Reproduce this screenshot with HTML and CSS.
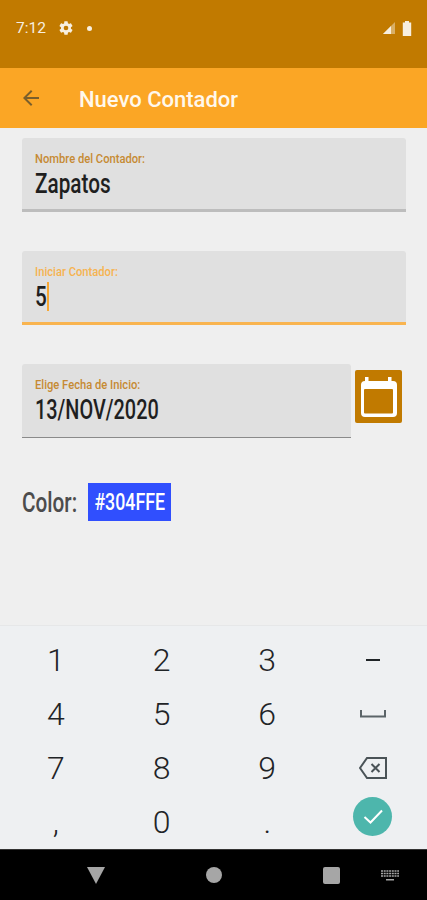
FILE: index.html
```html
<!DOCTYPE html>
<html lang="es">
  <head>
    <meta charset="UTF-8" />
    <meta name="viewport" content="width=device-width, initial-scale=1.0" />
    <title>Nuevo Contador</title>
    <link rel="stylesheet" href="styles.css">
  </head>
  <body>
    <div class="phone">
      <div class="status-bar">
        <div class="status-left">
          <span class="clock">7:12</span>
          <svg class="gear" viewBox="0 0 24 24" width="16" height="16"><path fill="#f7efe0" d="M19.4 13c.04-.33.06-.66.06-1s-.02-.67-.07-1l2.1-1.65c.2-.15.25-.42.13-.64l-2-3.46c-.12-.22-.39-.3-.61-.22l-2.49 1c-.52-.4-1.08-.73-1.69-.98l-.38-2.65A.49.49 0 0 0 14 2h-4c-.25 0-.46.18-.49.42l-.38 2.65c-.61.25-1.17.59-1.69.98l-2.49-1c-.23-.09-.49 0-.61.22l-2 3.46c-.13.22-.07.49.12.64L4.57 11c-.04.32-.07.66-.07 1s.03.68.07 1l-2.11 1.65c-.19.15-.24.42-.12.64l2 3.46c.12.22.39.3.61.22l2.49-1c.52.4 1.08.73 1.69.98l.38 2.65c.03.24.24.42.49.42h4c.25 0 .46-.18.49-.42l.38-2.65c.61-.25 1.17-.59 1.69-.98l2.49 1c.23.09.49 0 .61-.22l2-3.46c.12-.22.07-.49-.12-.64L19.4 13zM12 15.500a3.500 3.500 0 1 1 0-7 3.500 3.500 0 0 1 0 7z"/></svg>
          <span class="dot"></span>
        </div>
        <div class="status-right">
          <svg viewBox="0 0 14 14" width="14" height="14"><path fill="#f7efe0" d="M1 13 13 1v12z" opacity=".45"/><path fill="#f7efe0" d="M1 13 9 5v8z"/></svg>
          <svg viewBox="0 0 10 15" width="10" height="15"><path fill="#f7efe0" d="M3 0h4v1.500h2.200V15H.8V1.500H3z"/></svg>
        </div>
      </div>

      <div class="app-bar">
        <svg class="back" viewBox="0 0 24 24" width="24" height="24"><path fill="#7a5f2c" d="M20 11H7.800l5.600-5.600L12 4l-8 8 8 8 1.400-1.400L7.800 13H20z"/></svg>
        <span class="app-title">Nuevo Contador</span>
      </div>

      <div class="form">
        <div class="field">
          <span class="field-label">Nombre del Contador:</span>
          <span class="field-value"><span class="value-text">Zapatos</span></span>
        </div>
        <div class="field field-active">
          <span class="field-label">Iniciar Contador:</span>
          <span class="field-value"><span class="value-text value-short">5</span><span class="caret"></span></span>
        </div>
        <div class="date-row">
          <div class="field field-date">
            <span class="field-label">Elige Fecha de Inicio:</span>
            <span class="field-value"><span class="value-text value-date">13/NOV/2020</span></span>
          </div>
          <div class="date-btn">
            <svg viewBox="0 0 47 53" width="47" height="53"><path fill="#fff" d="M10 7h3.500v4h19.500V7h3.500v4h1.500a4 4 0 0 1 4 4v28a4 4 0 0 1-4 4H10a4 4 0 0 1-4-4V15a4 4 0 0 1 4-4z"/><rect x="9" y="19" width="29" height="24.500" rx="1" fill="#c17a00"/></svg>
          </div>
        </div>
        <div class="color-row">
          <span class="color-label"><span class="color-text">Color:</span></span>
          <span class="color-chip"><span class="chip-text">#304FFE</span></span>
        </div>
      </div>

      <div class="keyboard">
        <div class="key">1</div>
        <div class="key">2</div>
        <div class="key">3</div>
        <div class="key"><span class="minus"></span></div>
        <div class="key">4</div>
        <div class="key">5</div>
        <div class="key">6</div>
        <div class="key">
          <svg viewBox="0 0 26 10" width="26" height="10"><path fill="none" stroke="#5b6468" stroke-width="2" d="M1 1v6.500h24V1"/></svg>
        </div>
        <div class="key">7</div>
        <div class="key">8</div>
        <div class="key">9</div>
        <div class="key">
          <svg viewBox="0 0 28 22" width="28" height="22"><path fill="none" stroke="#4a5357" stroke-width="2" d="M8 1h19v20H8L1 11z"/><path fill="none" stroke="#4a5357" stroke-width="2" d="m12.500 7 8 8m0-8-8 8"/></svg>
        </div>
        <div class="key">,</div>
        <div class="key">0</div>
        <div class="key">.</div>
        <div class="key">
          <div class="enter">
            <svg viewBox="0 0 24 24" width="24" height="24"><path fill="none" stroke="#fff" stroke-width="2" d="m3.500 13 6 5.500L21 6.500"/></svg>
          </div>
        </div>
      </div>

      <div class="nav-bar">
        <svg class="nav-back" viewBox="0 0 18 17" width="18" height="17"><path fill="#a6a6a6" d="M0 0h18L9 17z"/></svg>
        <span class="nav-home"></span>
        <span class="nav-recent"></span>
        <svg class="nav-kbd" viewBox="0 0 18 11" width="18" height="11"><path fill="none" stroke="#a6a6a6" stroke-width="1.300" stroke-dasharray="2 .7" d="M0 1h18M0 3.500h18M0 6h18"/><path fill="#a6a6a6" d="M5 9h8v1.500H5z"/></svg>
      </div>
    </div>
  </body>
</html>
```

FILE: styles.css
```css
html,
body {
  margin: 0;
  padding: 0;
}

body {
  font-family: Roboto, sans-serif;
  background: #efefef;
}

.phone {
  width: 427px;
  height: 900px;
  display: flex;
  flex-direction: column;
  overflow: hidden;
}

/* Status bar */
.status-bar {
  height: 68px;
  flex: none;
  background: #c17a00;
  display: flex;
  justify-content: space-between;
  align-items: center;
  padding: 0 15px 12px 16px;
  box-sizing: border-box;
  color: #f7efe0;
}

.status-left {
  display: flex;
  align-items: center;
}

.clock {
  font-size: 15.500px;
  width: 42px;
}

.dot {
  width: 5px;
  height: 5px;
  border-radius: 50%;
  background: #f7efe0;
  margin-left: 13px;
}

.status-right {
  display: flex;
  align-items: center;
  gap: 6px;
}

/* App bar */
.app-bar {
  height: 60px;
  flex: none;
  background: #fba625;
  display: flex;
  align-items: center;
  padding-left: 19px;
  box-sizing: border-box;
}

.app-title {
  margin-left: 36px;
  padding-top: 2px;
  color: #fff8ec;
  font-size: 22px;
  font-weight: 500;
}

/* Form */
.form {
  flex: 1;
  padding: 10px 21px 0 22px;
  display: flex;
  flex-direction: column;
}

.field {
  height: 74px;
  box-sizing: border-box;
  background: #e0e0e0;
  border-bottom: 3px solid #bdbdbd;
  border-radius: 3px 3px 0 0;
  padding: 14px 13px 0;
  margin-bottom: 39px;
  display: flex;
  flex-direction: column;
}

/* no condensed font installed, so the text is squeezed sideways */
.field-label {
  display: inline-block;
  font-size: 13px;
  line-height: 14px;
  font-weight: 500;
  color: #c68a33;
  white-space: nowrap;
  transform: scaleX(0.86);
  transform-origin: left;
}

.field-value {
  font-size: 28px;
  line-height: 33px;
  margin-top: 1px;
  font-weight: 500;
  color: #1f1f1f;
  display: flex;
  align-items: center;
}

.value-text {
  display: inline-block;
  white-space: nowrap;
  transform: scaleX(0.74);
  transform-origin: left;
}

.value-short {
  width: 12px;
}

.value-date {
  transform: scaleX(0.71);
}

.field-active {
  border-bottom-color: #f9b44f;
}

.field-active .field-label {
  color: #f6b350;
}

.caret {
  width: 2px;
  height: 29px;
  background: #f7a733;
}

.date-row {
  display: flex;
  align-items: flex-start;
  gap: 4px;
}

.field-date {
  width: 329px;
  flex: none;
  border-bottom: 1px solid #8a8a8a;
  margin-bottom: 45px;
}

.date-btn {
  width: 47px;
  height: 53px;
  margin-top: 6px;
  background: #c17a00;
  border-radius: 2px;
}

.color-row {
  display: flex;
  align-items: center;
}

.color-label {
  width: 66px;
  font-size: 28px;
  font-weight: 500;
  color: #4c4c4c;
}

.color-text {
  display: inline-block;
  white-space: nowrap;
  transform: scaleX(0.74);
  transform-origin: left;
}

.color-chip {
  width: 83px;
  height: 38px;
  background: #304ffe;
  color: #fff;
  font-size: 24px;
  font-weight: 500;
  display: flex;
  align-items: center;
  justify-content: center;
}

.chip-text {
  white-space: nowrap;
  transform: scaleX(0.74);
}

/* Keyboard */
.keyboard {
  height: 224px;
  flex: none;
  box-sizing: border-box;
  background: #eef0f2;
  border-top: 1px solid #e6e7e8;
  padding: 7px 0 0 3px;
  display: grid;
  grid-template-columns: repeat(4, 105.700px);
  grid-auto-rows: 54px;
}

.key {
  display: flex;
  align-items: center;
  justify-content: center;
  font-size: 32px;
  font-weight: 300;
  color: #1f2427;
}

.minus {
  width: 14px;
  height: 2px;
  background: #1f2427;
}

.enter {
  width: 39px;
  height: 39px;
  border-radius: 50%;
  background: #4db6ac;
  display: flex;
  align-items: center;
  justify-content: center;
  margin-bottom: 12px;
}

/* Nav bar */
.nav-bar {
  height: 51px;
  flex: none;
  background: #000;
  border-top: 1px solid #333;
  box-sizing: border-box;
  display: grid;
  grid-template-columns: 192px 88px 106px 1fr;
  align-items: center;
}

.nav-back {
  justify-self: end;
  margin-right: 87px;
}

.nav-home {
  width: 16px;
  height: 16px;
  border-radius: 50%;
  background: #a6a6a6;
  margin-left: 14px;
}

.nav-recent {
  width: 17px;
  height: 17px;
  border-radius: 2px;
  background: #a6a6a6;
  margin-left: 43px;
}

.nav-kbd {
  margin-left: -5px;
}
```
